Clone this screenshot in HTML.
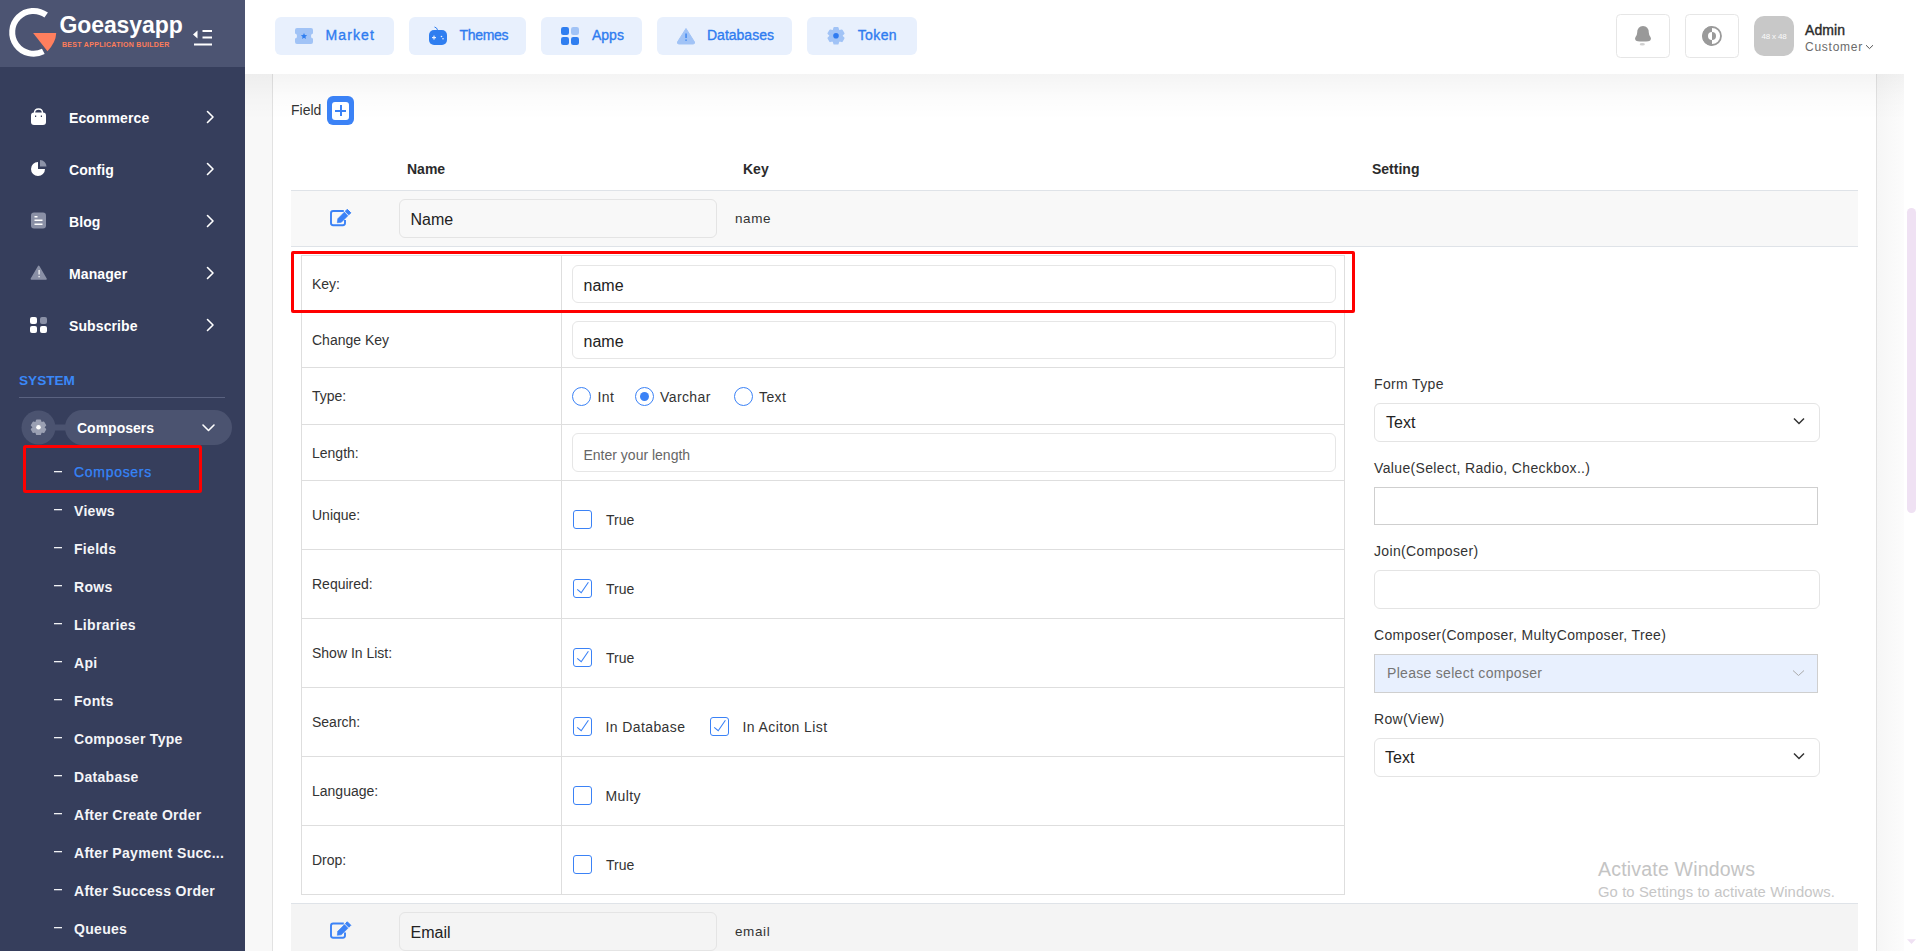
<!DOCTYPE html>
<html><head><meta charset="utf-8">
<style>
*{box-sizing:border-box;margin:0;padding:0}
html,body{width:1918px;height:951px;overflow:hidden;background:#f4f4f4;font-family:"Liberation Sans",sans-serif;color:#333}
.abs{position:absolute}
#sb{position:absolute;left:0;top:0;width:245px;height:951px;background:#363e5c}
#logo{position:absolute;left:0;top:0;width:245px;height:67px;background:#4c5472}
.mi{position:absolute;left:69px;font-size:14px;font-weight:bold;color:#fff;line-height:16px;letter-spacing:0.1px;margin-top:0.5px}
.chev{position:absolute;left:206px;width:9px;height:13px}
.sub{position:absolute;left:74px;font-size:14px;font-weight:bold;color:#f4f5f8;line-height:16px;letter-spacing:0.3px;white-space:nowrap;margin-top:1px}
.dash{position:absolute;left:54px;width:8px;height:1.5px;background:#fff}
#hdr{position:absolute;left:245px;top:0;width:1673px;height:74px;background:#fff}
.hb{position:absolute;top:17px;height:38px;background:#e8f0fd;border-radius:6px}
.hb span{position:absolute;top:10px;font-size:14px;line-height:16px;color:#2f7cf0;-webkit-text-stroke:0.35px #2f7cf0}
.hb svg{position:absolute}
</style></head><body>

<div id="main">
<div class="abs" style="left:245px;top:74px;width:1659px;height:877px;background:#f8f8f8"></div><div class="abs" style="left:1877px;top:74px;width:27px;height:877px;background:linear-gradient(to right,#f6f6f6,#fcfcfc)"></div><div class="abs" style="left:1904px;top:74px;width:14px;height:877px;background:#fff"></div><div class="abs" style="left:1906.5px;top:208px;width:9px;height:305px;border-radius:5px;background:#efe1f3"></div><svg class="abs" style="left:1900px;top:0" width="18" height="951" viewBox="1900 0 18 951"><path d="M1907 8.8 L1911.5 3.9 L1916 8.8 Z" fill="#efe1f3"/><path d="M1907 939.2 L1911.5 944 L1916 939.2 Z" fill="#efe1f3"/></svg><div class="abs" style="left:272px;top:74px;width:1605px;height:877px;background:#fff;border-left:1px solid #e2e2e2;border-right:1px solid #e2e2e2"></div><div class="abs" style="left:245px;top:74px;width:1659px;height:46px;background:linear-gradient(rgba(0,0,0,0.045),rgba(0,0,0,0.015) 50%,rgba(0,0,0,0))"></div><div class="abs" style="left:291px;top:102px;font-size:14px;line-height:16px;color:#333">Field</div><div class="abs" style="left:327px;top:96px;width:27px;height:29px;border-radius:6px;background:#3b82f6"></div><div class="abs" style="left:332px;top:102px;width:17px;height:17.5px;border-radius:3px;background:#fff"></div><div class="abs" style="left:335px;top:109.8px;width:11px;height:2px;background:#3b82f6"></div><div class="abs" style="left:339.5px;top:105.3px;width:2px;height:11px;background:#3b82f6"></div><div class="abs" style="left:407px;top:161px;font-size:14px;font-weight:bold;line-height:16px;color:#2b2b2b">Name</div><div class="abs" style="left:743px;top:161px;font-size:14px;font-weight:bold;line-height:16px;color:#2b2b2b">Key</div><div class="abs" style="left:1372px;top:161px;font-size:14px;font-weight:bold;line-height:16px;color:#2b2b2b">Setting</div><div class="abs" style="left:291px;top:190px;width:1567px;height:1px;background:#dfe3e8"></div><div class="abs" style="left:291px;top:191px;width:1567px;height:55px;background:#f8f8f8"></div><div class="abs" style="left:291px;top:246px;width:1567px;height:1px;background:#dfe3e8"></div><div class="abs" style="left:399px;top:199px;width:318px;height:39px;border:1px solid #e4e4e4;border-radius:6px;background:#f8f8f8"></div><div class="abs" style="left:410.5px;top:211px;font-size:16px;line-height:18px;color:#222">Name</div><div class="abs" style="left:735px;top:211px;font-size:13.5px;line-height:16px;color:#333;letter-spacing:0.6px">name</div><div class="abs" style="left:291px;top:903px;width:1567px;height:48px;background:#f4f4f4;border-top:1px solid #dfe3e8"></div><div class="abs" style="left:399px;top:912px;width:318px;height:39px;border:1px solid #e4e4e4;border-radius:6px;background:#f4f4f4"></div><div class="abs" style="left:410.5px;top:924px;font-size:16px;line-height:18px;color:#222">Email</div><div class="abs" style="left:735px;top:924px;font-size:13.5px;line-height:16px;color:#333;letter-spacing:0.6px">email</div><div class="abs" style="left:301px;top:255px;width:1044px;height:640px;border:1px solid #dedede"></div><div class="abs" style="left:561px;top:255px;width:1px;height:640px;background:#dedede"></div><div class="abs" style="left:312px;top:275.5px;font-size:14px;line-height:16px;color:#333">Key:</div><div class="abs" style="left:301px;top:311px;width:1044px;height:1px;background:#dedede"></div><div class="abs" style="left:312px;top:331.5px;font-size:14px;line-height:16px;color:#333">Change Key</div><div class="abs" style="left:301px;top:367px;width:1044px;height:1px;background:#dedede"></div><div class="abs" style="left:312px;top:388.0px;font-size:14px;line-height:16px;color:#333">Type:</div><div class="abs" style="left:301px;top:424px;width:1044px;height:1px;background:#dedede"></div><div class="abs" style="left:312px;top:444.5px;font-size:14px;line-height:16px;color:#333">Length:</div><div class="abs" style="left:301px;top:480px;width:1044px;height:1px;background:#dedede"></div><div class="abs" style="left:312px;top:507.0px;font-size:14px;line-height:16px;color:#333">Unique:</div><div class="abs" style="left:301px;top:549px;width:1044px;height:1px;background:#dedede"></div><div class="abs" style="left:312px;top:576.0px;font-size:14px;line-height:16px;color:#333">Required:</div><div class="abs" style="left:301px;top:618px;width:1044px;height:1px;background:#dedede"></div><div class="abs" style="left:312px;top:645.0px;font-size:14px;line-height:16px;color:#333">Show In List:</div><div class="abs" style="left:301px;top:687px;width:1044px;height:1px;background:#dedede"></div><div class="abs" style="left:312px;top:714.0px;font-size:14px;line-height:16px;color:#333">Search:</div><div class="abs" style="left:301px;top:756px;width:1044px;height:1px;background:#dedede"></div><div class="abs" style="left:312px;top:783.0px;font-size:14px;line-height:16px;color:#333">Language:</div><div class="abs" style="left:301px;top:825px;width:1044px;height:1px;background:#dedede"></div><div class="abs" style="left:312px;top:852.0px;font-size:14px;line-height:16px;color:#333">Drop:</div><div class="abs" style="left:572px;top:264.5px;width:764px;height:38.5px;border:1px solid #e6e6e6;border-radius:6px;background:#fff"></div><div class="abs" style="left:583.5px;top:276.5px;font-size:16px;line-height:18px;color:#222">name</div><div class="abs" style="left:572px;top:321px;width:764px;height:38px;border:1px solid #e6e6e6;border-radius:6px;background:#fff"></div><div class="abs" style="left:583.5px;top:332.5px;font-size:16px;line-height:18px;color:#222">name</div><div class="abs" style="left:572px;top:433px;width:764px;height:39px;border:1px solid #e6e6e6;border-radius:6px;background:#fff"></div><div class="abs" style="left:583.5px;top:446.5px;font-size:14px;line-height:16px;color:#666">Enter your length</div><div class="abs" style="left:572px;top:387px;width:19px;height:19px;border:1.3px solid #3b82f6;border-radius:50%;background:#fff"></div><div class="abs" style="left:597.5px;top:389px;font-size:14px;line-height:16px;color:#333;letter-spacing:0.4px">Int</div><div class="abs" style="left:635px;top:387px;width:19px;height:19px;border:1.3px solid #3b82f6;border-radius:50%;background:#fff"></div><div class="abs" style="left:640px;top:392px;width:9px;height:9px;border-radius:50%;background:#3b82f6"></div><div class="abs" style="left:660px;top:389px;font-size:14px;line-height:16px;color:#333;letter-spacing:0.4px">Varchar</div><div class="abs" style="left:734px;top:387px;width:19px;height:19px;border:1.3px solid #3b82f6;border-radius:50%;background:#fff"></div><div class="abs" style="left:759px;top:389px;font-size:14px;line-height:16px;color:#333;letter-spacing:0.4px">Text</div><div class="abs" style="left:573px;top:510px;width:19px;height:19px;border:1.3px solid #3b82f6;border-radius:3px;background:#fff"></div><div class="abs" style="left:606px;top:512px;font-size:14px;line-height:16px;color:#333">True</div><div class="abs" style="left:573px;top:579px;width:19px;height:19px;border:1.3px solid #3b82f6;border-radius:3px;background:#fff"></div><svg class="abs" style="left:573px;top:579px" width="19" height="19" viewBox="0 0 19 19"><path d="M4.2 10.3 L8.2 13.7 L15.4 3.2" fill="none" stroke="#3b82f6" stroke-width="1.1"/></svg><div class="abs" style="left:606px;top:581px;font-size:14px;line-height:16px;color:#333">True</div><div class="abs" style="left:573px;top:648px;width:19px;height:19px;border:1.3px solid #3b82f6;border-radius:3px;background:#fff"></div><svg class="abs" style="left:573px;top:648px" width="19" height="19" viewBox="0 0 19 19"><path d="M4.2 10.3 L8.2 13.7 L15.4 3.2" fill="none" stroke="#3b82f6" stroke-width="1.1"/></svg><div class="abs" style="left:606px;top:650px;font-size:14px;line-height:16px;color:#333">True</div><div class="abs" style="left:573px;top:717px;width:19px;height:19px;border:1.3px solid #3b82f6;border-radius:3px;background:#fff"></div><svg class="abs" style="left:573px;top:717px" width="19" height="19" viewBox="0 0 19 19"><path d="M4.2 10.3 L8.2 13.7 L15.4 3.2" fill="none" stroke="#3b82f6" stroke-width="1.1"/></svg><div class="abs" style="left:605.5px;top:719px;font-size:14px;line-height:16px;color:#333;letter-spacing:0.4px">In Database</div><div class="abs" style="left:710px;top:717px;width:19px;height:19px;border:1.3px solid #3b82f6;border-radius:3px;background:#fff"></div><svg class="abs" style="left:710px;top:717px" width="19" height="19" viewBox="0 0 19 19"><path d="M4.2 10.3 L8.2 13.7 L15.4 3.2" fill="none" stroke="#3b82f6" stroke-width="1.1"/></svg><div class="abs" style="left:742.5px;top:719px;font-size:14px;line-height:16px;color:#333;letter-spacing:0.4px">In Aciton List</div><div class="abs" style="left:573px;top:786px;width:19px;height:19px;border:1.3px solid #3b82f6;border-radius:3px;background:#fff"></div><div class="abs" style="left:605.5px;top:788px;font-size:14px;line-height:16px;color:#333;letter-spacing:0.4px">Multy</div><div class="abs" style="left:573px;top:855px;width:19px;height:19px;border:1.3px solid #3b82f6;border-radius:3px;background:#fff"></div><div class="abs" style="left:606px;top:857px;font-size:14px;line-height:16px;color:#333">True</div><div class="abs" style="left:291px;top:251px;width:1064px;height:62px;border:3px solid #ff0000;border-radius:2px"></div><div class="abs" style="left:1374px;top:376px;font-size:14px;line-height:16px;color:#333;letter-spacing:0.35px">Form Type</div><div class="abs" style="left:1374px;top:460px;font-size:14px;line-height:16px;color:#333;letter-spacing:0.35px">Value(Select, Radio, Checkbox..)</div><div class="abs" style="left:1374px;top:543px;font-size:14px;line-height:16px;color:#333;letter-spacing:0.35px">Join(Composer)</div><div class="abs" style="left:1374px;top:627px;font-size:14px;line-height:16px;color:#333;letter-spacing:0.35px">Composer(Composer, MultyComposer, Tree)</div><div class="abs" style="left:1374px;top:711px;font-size:14px;line-height:16px;color:#333;letter-spacing:0.35px">Row(View)</div><div class="abs" style="left:1374px;top:403px;width:446px;height:39px;border:1px solid #e4e4e4;border-radius:6px;background:#fff"></div><div class="abs" style="left:1386px;top:414px;font-size:16px;line-height:18px;color:#222">Text</div><div class="abs" style="left:1374px;top:487px;width:444px;height:38px;border:1px solid #cfcfcf;background:#fff"></div><div class="abs" style="left:1374px;top:570px;width:446px;height:39px;border:1px solid #e4e4e4;border-radius:6px;background:#fff"></div><div class="abs" style="left:1374px;top:654px;width:444px;height:39px;border:1px solid #cfcfcf;background:#e8f0fe"></div><div class="abs" style="left:1387px;top:665px;font-size:14px;line-height:16px;color:#757575;letter-spacing:0.3px">Please select composer</div><div class="abs" style="left:1374px;top:738px;width:446px;height:39px;border:1px solid #e4e4e4;border-radius:6px;background:#fff"></div><div class="abs" style="left:1385px;top:749px;font-size:16px;line-height:18px;color:#222">Text</div><svg class="abs" style="left:0;top:0" width="1918" height="951" viewBox="0 0 1918 951"><path d="M1794 418.5 L1799 423.5 L1804 418.5" fill="none" stroke="#333" stroke-width="1.5"/><path d="M1793 670.5 L1798.5 675.5 L1804 670.5" fill="none" stroke="#aaa" stroke-width="1"/><path d="M1794 753.5 L1799 758.5 L1804 753.5" fill="none" stroke="#333" stroke-width="1.5"/><path d="M343.8 211 H333.2 Q331 211 331 213.2 V223 Q331 225.2 333.2 225.2 H342.8 Q345 225.2 345 223 V220" fill="none" stroke="#3b82f6" stroke-width="1.9"/><path d="M337.30 222.80 L341.33 222.31 L347.98 215.66 L344.44 212.12 L337.79 218.77 Z" fill="#3b82f6" stroke="#3b82f6" stroke-width="0.6" stroke-linejoin="round"/><path d="M348.90 214.74 L350.81 212.83 L347.27 209.29 L345.36 211.20 Z" fill="#3b82f6" stroke="#3b82f6" stroke-width="1" stroke-linejoin="round"/><path d="M343.8 923.5 H333.2 Q331 923.5 331 925.7 V935.5 Q331 937.7 333.2 937.7 H342.8 Q345 937.7 345 935.5 V932.5" fill="none" stroke="#3b82f6" stroke-width="1.9"/><path d="M337.30 935.30 L341.33 934.81 L347.98 928.16 L344.44 924.62 L337.79 931.27 Z" fill="#3b82f6" stroke="#3b82f6" stroke-width="0.6" stroke-linejoin="round"/><path d="M348.90 927.24 L350.81 925.33 L347.27 921.79 L345.36 923.70 Z" fill="#3b82f6" stroke="#3b82f6" stroke-width="1" stroke-linejoin="round"/></svg><div class="abs" style="left:1598px;top:858px;font-size:19.5px;line-height:22px;color:#c4c4c4;letter-spacing:0.2px">Activate Windows</div><div class="abs" style="left:1598px;top:884px;font-size:14.8px;line-height:17px;color:#c6c6c6;letter-spacing:0.1px">Go to Settings to activate Windows.</div>
</div>
<div id="sb">
  <div id="logo">
    <svg class="abs" style="left:0;top:0" width="245" height="67" viewBox="0 0 245 67">
      <path d="M46.18 14.99 A21.4 21.4 0 1 0 43.32 51.37" fill="none" stroke="#fff" stroke-width="6"/>
      <path d="M33.1 33 L56.2 33 Q56 42 47.5 51.2 Z" fill="#ff7f5e"/>
      <path d="M193 34.5 L197.5 30.5 L197.5 38.5 Z" fill="#fff"/>
      <rect x="202.5" y="30" width="9.5" height="2" fill="#fff"/>
      <rect x="202.5" y="36.5" width="9.5" height="2" fill="#fff"/>
      <rect x="194" y="43.5" width="18" height="2" fill="#fff"/>
    </svg>
    <div class="abs" style="left:59.5px;top:11.5px;font-size:23px;font-weight:bold;color:#fff;letter-spacing:-0.1px;line-height:26px">Goeasyapp</div>
    <div class="abs" style="left:62px;top:41.3px;font-size:7px;font-weight:bold;color:#ff7d5a;letter-spacing:0.3px;line-height:8px">BEST APPLICATION BUILDER</div>
  </div>
<svg class="abs" style="left:0;top:0" width="245" height="951" viewBox="0 0 245 951"><path d="M34.5 113 Q34.5 109 38.5 109 Q42.5 109 42.5 113" fill="none" stroke="#fff" stroke-width="1.4"/><rect x="31" y="112.5" width="15" height="12.5" rx="3" fill="#fff"/><rect x="35" y="115.5" width="1.2" height="1.5" fill="#363e5c"/><rect x="40.8" y="115.5" width="1.2" height="1.5" fill="#363e5c"/><path d="M207.5 111.5 L213 117 L207.5 122.5" fill="none" stroke="#fff" stroke-width="1.6" stroke-linecap="round" stroke-linejoin="round"/><path d="M38 162 A7 7 0 1 0 45 169 L38 169 Z" fill="#fff"/><path d="M40 160 A6.5 6.5 0 0 1 46.5 166.5 L40 166.5 Z" fill="#8d93a8"/><path d="M207.5 163.5 L213 169 L207.5 174.5" fill="none" stroke="#fff" stroke-width="1.6" stroke-linecap="round" stroke-linejoin="round"/><rect x="31" y="212.5" width="15" height="16" rx="3" fill="#8a90a6"/><rect x="34.5" y="216" width="3" height="1.5" fill="#fff"/><rect x="34.5" y="219.5" width="8" height="1.5" fill="#fff"/><rect x="34.5" y="223.5" width="8" height="1.5" fill="#fff"/><path d="M207.5 215.5 L213 221 L207.5 226.5" fill="none" stroke="#fff" stroke-width="1.6" stroke-linecap="round" stroke-linejoin="round"/><path d="M38.7 266.4 L46 279 L31.4 279 Z" fill="#8a90a6" stroke="#8a90a6" stroke-width="1.6" stroke-linejoin="round"/><rect x="38.5" y="270" width="1.2" height="4.5" fill="#fff"/><rect x="38.5" y="276" width="1.2" height="1.3" fill="#fff"/><path d="M207.5 267.5 L213 273 L207.5 278.5" fill="none" stroke="#fff" stroke-width="1.6" stroke-linecap="round" stroke-linejoin="round"/><rect x="30" y="317" width="7" height="7" rx="2" fill="#fff"/><rect x="40" y="317" width="7" height="7" rx="2" fill="#8a90a6"/><rect x="30" y="326" width="7" height="7" rx="2" fill="#fff"/><rect x="40" y="326" width="7" height="7" rx="2" fill="#fff"/><path d="M207.5 319.5 L213 325 L207.5 330.5" fill="none" stroke="#fff" stroke-width="1.6" stroke-linecap="round" stroke-linejoin="round"/><circle cx="38.5" cy="427.5" r="17" fill="#4b5370"/><rect x="54" y="424.5" width="12" height="6" fill="#4b5370"/><rect x="65" y="410" width="167" height="35" rx="17.5" fill="#4b5370"/><path d="M203 425 L208.5 430.5 L214 425" fill="none" stroke="#fff" stroke-width="1.6" stroke-linecap="round" stroke-linejoin="round"/><path d="M36.13 422.45 L36.76 420.31 L40.24 420.31 L40.87 422.45 L41.52 422.82 L43.68 422.30 L45.42 425.32 L43.89 426.92 L43.89 427.68 L45.42 429.28 L43.68 432.30 L41.52 431.78 L40.87 432.15 L40.24 434.29 L36.76 434.29 L36.13 432.15 L35.48 431.78 L33.32 432.30 L31.58 429.28 L33.11 427.68 L33.11 426.92 L31.58 425.32 L33.32 422.30 L35.48 422.82 Z" fill="#9ba0b3" stroke="#9ba0b3" stroke-width="1.6" stroke-linejoin="round"/><circle cx="38.5" cy="427.3" r="2.3" fill="#fff"/><rect x="19" y="397" width="206" height="1" fill="#5a6280"/><rect x="24.5" y="446.5" width="176" height="45" rx="1" fill="none" stroke="#ff0000" stroke-width="3"/><rect x="54" y="471" width="8" height="1.3" fill="#f0f1f4"/><rect x="54" y="509" width="8" height="1.3" fill="#f0f1f4"/><rect x="54" y="547" width="8" height="1.3" fill="#f0f1f4"/><rect x="54" y="585" width="8" height="1.3" fill="#f0f1f4"/><rect x="54" y="623" width="8" height="1.3" fill="#f0f1f4"/><rect x="54" y="661" width="8" height="1.3" fill="#f0f1f4"/><rect x="54" y="699" width="8" height="1.3" fill="#f0f1f4"/><rect x="54" y="737" width="8" height="1.3" fill="#f0f1f4"/><rect x="54" y="775" width="8" height="1.3" fill="#f0f1f4"/><rect x="54" y="813" width="8" height="1.3" fill="#f0f1f4"/><rect x="54" y="851" width="8" height="1.3" fill="#f0f1f4"/><rect x="54" y="889" width="8" height="1.3" fill="#f0f1f4"/><rect x="54" y="927" width="8" height="1.3" fill="#f0f1f4"/></svg><div class="mi" style="top:109px">Ecommerce</div>
<div class="mi" style="top:161px">Config</div>
<div class="mi" style="top:213px">Blog</div>
<div class="mi" style="top:265px">Manager</div>
<div class="mi" style="top:317px">Subscribe</div>
<div class="abs" style="left:19px;top:372.5px;font-size:13.6px;font-weight:bold;color:#3a88f8;line-height:16px">SYSTEM</div>
<div class="abs" style="left:77px;top:420px;font-size:14px;font-weight:bold;color:#fff;line-height:16px">Composers</div>
<div class="sub" style="top:463px;color:#3584f8;font-weight:normal;letter-spacing:0.7px;-webkit-text-stroke:0.25px #3584f8">Composers</div>
<div class="sub" style="top:502px">Views</div>
<div class="sub" style="top:540px">Fields</div>
<div class="sub" style="top:578px">Rows</div>
<div class="sub" style="top:616px">Libraries</div>
<div class="sub" style="top:654px">Api</div>
<div class="sub" style="top:692px">Fonts</div>
<div class="sub" style="top:730px">Composer Type</div>
<div class="sub" style="top:768px">Database</div>
<div class="sub" style="top:806px">After Create Order</div>
<div class="sub" style="top:844px">After Payment Succ...</div>
<div class="sub" style="top:882px">After Success Order</div>
<div class="sub" style="top:920px">Queues</div>
</div>
<div id="hdr">
<div class="hb" style="left:30px;width:119px"><span style="left:50.6px;letter-spacing:1.1px">Market</span></div>
<div class="hb" style="left:164px;width:117px"><span style="left:50.6px;letter-spacing:-0.35px">Themes</span></div>
<div class="hb" style="left:296px;width:101px"><span style="left:51.0px;letter-spacing:0px">Apps</span></div>
<div class="hb" style="left:412px;width:135px"><span style="left:50.0px;letter-spacing:0px">Databases</span></div>
<div class="hb" style="left:562px;width:110px"><span style="left:50.7px;letter-spacing:0.4px">Token</span></div>
<svg class="abs" style="left:0;top:0" width="1673" height="74" viewBox="245 0 1673 74"><path d="M297 28 H311 Q313 28 313 30 V33.5 Q311 33.5 311 36 Q311 38.5 313 38.5 V42 Q313 44 311 44 H297 Q295 44 295 42 V38.5 Q297 38.5 297 36 Q297 33.5 295 33.5 V30 Q295 28 297 28 Z" fill="#a1c3f6"/><path d="M304.00 33.00 L304.88 35.09 L307.14 35.28 L305.43 36.76 L305.94 38.97 L304.00 37.80 L302.06 38.97 L302.57 36.76 L300.86 35.28 L303.12 35.09 Z" fill="#2f7ef0"/><rect x="429" y="30" width="18" height="15" rx="5" fill="#2f7ef0"/><path d="M437.5 30 Q437 27.5 434.5 27" fill="none" stroke="#2f7ef0" stroke-width="1"/><rect x="432" y="37" width="4" height="1.2" fill="#e9f0fc"/><rect x="433.4" y="35.6" width="1.2" height="4" fill="#e9f0fc"/><circle cx="441.5" cy="36.5" r="0.8" fill="#e9f0fc"/><circle cx="443" cy="38.7" r="0.8" fill="#e9f0fc"/><rect x="561" y="27" width="8" height="8" rx="2.2" fill="#2f7ef0"/><rect x="571" y="27" width="8" height="8" rx="2.2" fill="#a1c3f6"/><rect x="561" y="37" width="8" height="8" rx="2.2" fill="#2f7ef0"/><rect x="571" y="37" width="8" height="8" rx="2.2" fill="#2f7ef0"/><path d="M686 28.5 L694.5 42 Q695 44 693 44 L679 44 Q677 44 677.5 42 Z" fill="#a1c3f6" stroke="#a1c3f6" stroke-width="1" stroke-linejoin="round"/><rect x="685.4" y="33.5" width="1.3" height="4.5" fill="#2f7ef0"/><rect x="685.4" y="39.5" width="1.3" height="1.3" fill="#2f7ef0"/><path d="M833.46 30.36 L834.18 27.91 L837.82 27.91 L838.54 30.36 L839.44 30.89 L841.92 30.28 L843.75 33.43 L841.98 35.28 L841.98 36.32 L843.75 38.17 L841.92 41.32 L839.44 40.71 L838.54 41.24 L837.82 43.69 L834.18 43.69 L833.46 41.24 L832.56 40.71 L830.08 41.32 L828.25 38.17 L830.02 36.32 L830.02 35.28 L828.25 33.43 L830.08 30.28 L832.56 30.89 Z" fill="#a1c3f6" stroke="#a1c3f6" stroke-width="1.6" stroke-linejoin="round"/><circle cx="836" cy="35.8" r="2.8" fill="#2f7bf0"/><rect x="1616.5" y="14.5" width="53" height="43" rx="4" fill="#fff" stroke="#e6e6e6" stroke-width="1"/><rect x="1685.5" y="14.5" width="53" height="43" rx="4" fill="#fff" stroke="#e6e6e6" stroke-width="1"/><path d="M1643 26 Q1648.5 26 1648.8 32.5 Q1649 35.5 1650.3 36.8 Q1651.5 38.2 1650.6 40 Q1649.8 41.5 1643 41.5 Q1636.2 41.5 1635.4 40 Q1634.5 38.2 1635.7 36.8 Q1637 35.5 1637.2 32.5 Q1637.5 26 1643 26 Z" fill="#999"/><ellipse cx="1642.3" cy="44.2" rx="2.6" ry="1.3" fill="#d0d0d0"/><circle cx="1712" cy="36" r="9" fill="none" stroke="#9a9a9a" stroke-width="1.8"/><path d="M1712 26.1 A9.9 9.9 0 0 0 1712 45.9 Z" fill="#9a9a9a"/><path d="M1712 32 A4 4 0 0 0 1712 40 Z" fill="#fff"/><path d="M1712 32 A4 4 0 0 1 1712 40 Z" fill="#9a9a9a"/><rect x="1754" y="16" width="40" height="40" rx="10" fill="#c8c8c8"/><path d="M1866 45.2 L1869.5 48.6 L1873 45.2" fill="none" stroke="#555" stroke-width="1"/></svg><div class="abs" style="left:1509px;top:31.5px;font-size:8px;color:#fafafa;width:40px;text-align:center;line-height:9px;letter-spacing:-0.2px">48 x 48</div><div class="abs" style="left:1560px;top:23px;font-size:14px;color:#2b2b2b;line-height:15px;-webkit-text-stroke:0.4px #2b2b2b;letter-spacing:0.1px">Admin</div><div class="abs" style="left:1560px;top:39.5px;font-size:12px;color:#6b6b6b;letter-spacing:0.75px;line-height:14px">Customer</div>
</div>
</body></html>
